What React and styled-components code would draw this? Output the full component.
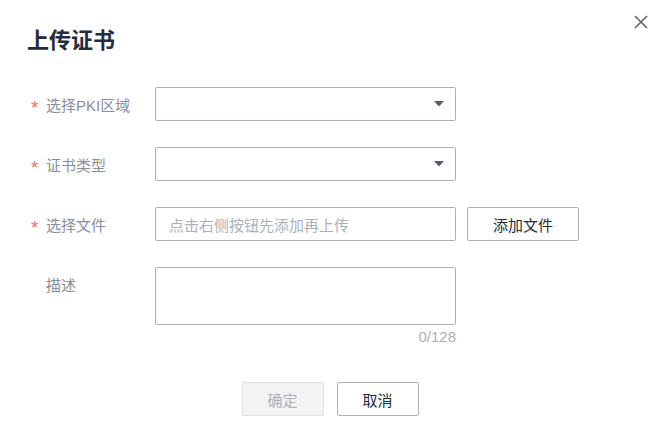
import React from "react";
import styled, { createGlobalStyle } from "styled-components";

const Global = createGlobalStyle`
  html, body { margin: 0; padding: 0; background: #ffffff; }
  body { font-family: "Liberation Sans", "Noto Sans CJK SC", sans-serif; }
  * { box-sizing: border-box; }
`;

const Dialog = styled.div`
  position: relative;
  width: 662px;
  height: 428px;
  padding-top: 25px;
  background: #fff;
`;

const Title = styled.h2`
  margin: 0 0 0 27px;
  font-size: 22px;
  line-height: 32px;
  font-weight: 700;
  color: #252b3a;
`;

const Close = styled.button`
  position: absolute;
  top: 14px;
  right: 13px;
  width: 16px;
  height: 16px;
  padding: 0;
  border: 0;
  background: none;
  display: flex;
  align-items: center;
  justify-content: center;
  cursor: pointer;
`;

const Form = styled.div`
  margin-top: 30px;
  padding-left: 31px;
  display: flex;
  flex-direction: column;
  gap: 26px;
`;

const Row = styled.div`
  display: grid;
  grid-template-columns: 113px 301px 112px;
  column-gap: 11px;
  align-items: start;
`;

const Label = styled.div`
  height: 34px;
  display: flex;
  align-items: center;
  font-size: 15px;
  color: #8a8e99;
  white-space: nowrap;
`;

const Star = styled.span`
  width: 15px;
  color: #f66f6a;
  font-size: 19px;
  line-height: 16px;
  padding-top: 7px;
  visibility: ${(p) => (p.$hidden ? "hidden" : "visible")};
`;

const Field = styled.div`
  height: ${(p) => p.$h || 34}px;
  border: 1px solid #adb0b8;
  border-radius: 2px;
  display: flex;
  align-items: center;
  justify-content: space-between;
  padding: 0 11px 0 13px;
  font-size: 15px;
  color: #adb0b8;
`;

const FieldCol = styled.div`
  display: flex;
  flex-direction: column;
`;

const Counter = styled.div`
  margin-top: 2px;
  text-align: right;
  font-size: 15px;
  line-height: 20px;
  color: #adb0b8;
`;

const Button = styled.button`
  width: ${(p) => p.$w}px;
  height: 34px;
  border-radius: 2px;
  font-family: inherit;
  font-size: 15px;
  border: 1px solid ${(p) => (p.$disabled ? "#dfe1e6" : "#adb0b8")};
  background: ${(p) => (p.$disabled ? "#f3f3f3" : "#ffffff")};
  color: ${(p) => (p.$disabled ? "#adb0b8" : "#252b3a")};
  padding: 0;
`;

const Footer = styled.div`
  margin-top: 35px;
  display: flex;
  justify-content: center;
  gap: 13px;
  padding-right: 2px;
`;

const Arrow = () => (
  <svg width="10" height="6" viewBox="0 0 10 6">
    <polygon points="0,0 10,0 5,5.5" fill="#575d6c" />
  </svg>
);

export default function App() {
  return (
    <>
      <Global />
      <Dialog>
        <Title>上传证书</Title>
        <Close aria-label="close">
          <svg width="14" height="14" viewBox="0 0 14 14">
            <path d="M1 1 L13 13 M13 1 L1 13" stroke="#575d6c" strokeWidth="1.5" />
          </svg>
        </Close>
        <Form>
          <Row>
            <Label><Star>*</Star>选择PKI区域</Label>
            <Field><span /><Arrow /></Field>
          </Row>
          <Row>
            <Label><Star>*</Star>证书类型</Label>
            <Field><span /><Arrow /></Field>
          </Row>
          <Row>
            <Label><Star>*</Star>选择文件</Label>
            <Field>点击右侧按钮先添加再上传</Field>
            <Button $w={112}>添加文件</Button>
          </Row>
          <Row>
            <Label><Star $hidden>*</Star>描述</Label>
            <FieldCol>
              <Field $h={58} />
              <Counter>0/128</Counter>
            </FieldCol>
          </Row>
        </Form>
        <Footer>
          <Button $w={82} $disabled>确定</Button>
          <Button $w={82}>取消</Button>
        </Footer>
      </Dialog>
    </>
  );
}
